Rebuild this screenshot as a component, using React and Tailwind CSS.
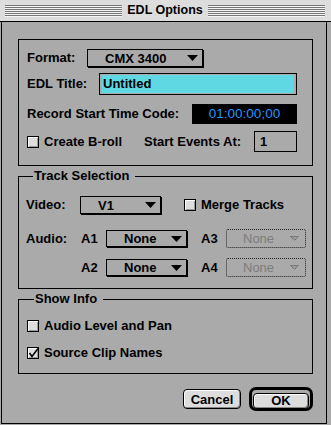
const Tri = () => (
  <svg width="11" height="6" viewBox="0 0 11 6" className="shrink-0">
    <polygon points="0,0 11,0 5.5,6" fill="#000" />
  </svg>
);

const Popup = ({ label, className }) => (
  <div
    className={`flex items-center justify-between pl-[17px] pr-[4px] border border-black bg-[#aaaaaa] shadow-[1px_1px_0_#000] ${className}`}
  >
    <span className="leading-none">{label}</span>
    <Tri />
  </div>
);

const DimPopup = ({ label }) => (
  <div className="flex items-center justify-between w-[80px] h-[19px] pl-[16px] pr-[6px] border border-dotted border-[#222] rounded-[2px] text-[#7c7c7c] font-normal">
    <span className="leading-none">{label}</span>
    <svg width="9" height="5" viewBox="0 0 9 5" className="shrink-0">
      <polygon points="0.5,0.5 8.5,0.5 4.5,4.5" fill="#9a9a9a" stroke="#555" strokeWidth="1" strokeDasharray="1 1" />
    </svg>
  </div>
);

const Check = ({ checked }) => (
  <span className="relative w-[12px] h-[12px] shrink-0 border border-black bg-[#dedede] shadow-[inset_1px_1px_0_#fff,inset_-1px_-1px_0_#9a9a9a]">
    {checked && (
      <svg width="12" height="12" viewBox="0 0 12 12" className="absolute -left-[1px] -top-[1px]">
        <path d="M2.5 6 L5 9.5 L11 1.5" stroke="#000" strokeWidth="1.6" fill="none" />
      </svg>
    )}
  </span>
);

const Stripes = () => (
  <div className="flex-1 h-[12px] bg-[repeating-linear-gradient(to_bottom,#777777_0px,#777777_1px,#f4f4f4_1px,#f4f4f4_2px)]" />
);

export default function App() {
  return (
    <div className="w-[331px] h-[425px] bg-[#aaaaaa] font-['Liberation_Sans',Arial,sans-serif] font-bold text-[13px] text-black select-none">
      {/* title bar */}
      <div className="h-[22px] flex items-center pl-[5px] pr-[6px] bg-[#dddddd] border-b border-black">
        <Stripes />
        <span className="px-[5px] text-[12.5px] leading-none">EDL Options</span>
        <Stripes />
      </div>

      <div className="ml-[1px] w-[326px] h-[402px] border-x border-b border-black pt-[17px] pl-[16px] pr-[13px]">
        {/* general */}
        <div className="border border-black pt-[9px] pb-[13px] pl-[8px]">
          <div className="flex items-center h-[18px]">
            <span className="w-[60px]">Format:</span>
            <Popup label="CMX 3400" className="w-[116px] h-[18px]" />
          </div>
          <div className="flex items-center h-[22px] mt-[6px]">
            <span className="w-[72px]">EDL Title:</span>
            <div className="w-[198px] h-[22px] border border-black px-[2px] py-[1px]">
              <div className="h-full bg-[#5fd8e3] flex items-center pl-[1px]">Untitled</div>
            </div>
          </div>
          <div className="flex items-center h-[20px] mt-[9px]">
            <span className="w-[165px]">Record Start Time Code:</span>
            <div className="w-[105px] h-[20px] bg-black text-[#2196ff] font-normal text-[13.5px] flex items-center justify-center">
              01:00:00;00
            </div>
          </div>
          <div className="flex items-center h-[21px] mt-[7px]">
            <Check />
            <span className="ml-[5px] w-[100px]">Create B-roll</span>
            <span className="w-[110px]">Start Events At:</span>
            <div className="w-[43px] h-[21px] border border-black flex items-center pl-[5px]">1</div>
          </div>
        </div>

        {/* track selection */}
        <fieldset className="mt-[3px] border border-black pb-[11px] pl-[7px]">
          <legend className="ml-[7px] pl-[1px] pr-[6px] leading-[14px]">Track Selection</legend>
          <div className="flex items-center h-[18px] mt-[13px]">
            <span className="w-[54px]">Video:</span>
            <Popup label="V1" className="w-[81px] h-[18px]" />
            <span className="ml-[23px] flex items-center">
              <Check />
              <span className="ml-[5px]">Merge Tracks</span>
            </span>
          </div>
          <div className="flex items-center h-[19px] mt-[15px]">
            <span className="w-[55px]">Audio:</span>
            <span className="w-[25px]">A1</span>
            <Popup label="None" className="w-[81px] h-[17px]" />
            <span className="ml-[14px] w-[25px]">A3</span>
            <DimPopup label="None" />
          </div>
          <div className="flex items-center h-[19px] mt-[10px]">
            <span className="w-[55px]" />
            <span className="w-[25px]">A2</span>
            <Popup label="None" className="w-[81px] h-[17px]" />
            <span className="ml-[14px] w-[25px]">A4</span>
            <DimPopup label="None" />
          </div>
        </fieldset>

        {/* show info */}
        <fieldset className="mt-[3px] border border-black pb-[13px] pl-[8px]">
          <legend className="ml-[7px] pl-[1px] pr-[6px] leading-[14px]">Show Info</legend>
          <div className="flex items-center h-[14px] mt-[13px]">
            <Check />
            <span className="ml-[5px]">Audio Level and Pan</span>
          </div>
          <div className="flex items-center h-[14px] mt-[13px]">
            <Check checked />
            <span className="ml-[5px]">Source Clip Names</span>
          </div>
        </fieldset>

        {/* buttons */}
        <div className="flex items-center justify-end gap-[8px] mt-[13px]">
          <button className="w-[58px] h-[20px] rounded-[4px] border border-black bg-[#dddddd] shadow-[inset_1px_1px_0_#fff,inset_-1px_-1px_0_#888] leading-none">
            Cancel
          </button>
          <div className="w-[64px] h-[24px] rounded-[7px] border-[3px] border-black p-[1px]">
            <button className="w-full h-full rounded-[4px] border border-black bg-[#dddddd] shadow-[inset_1px_1px_0_#fff,inset_-1px_-1px_0_#888] leading-none">
              OK
            </button>
          </div>
        </div>
      </div>
    </div>
  );
}
